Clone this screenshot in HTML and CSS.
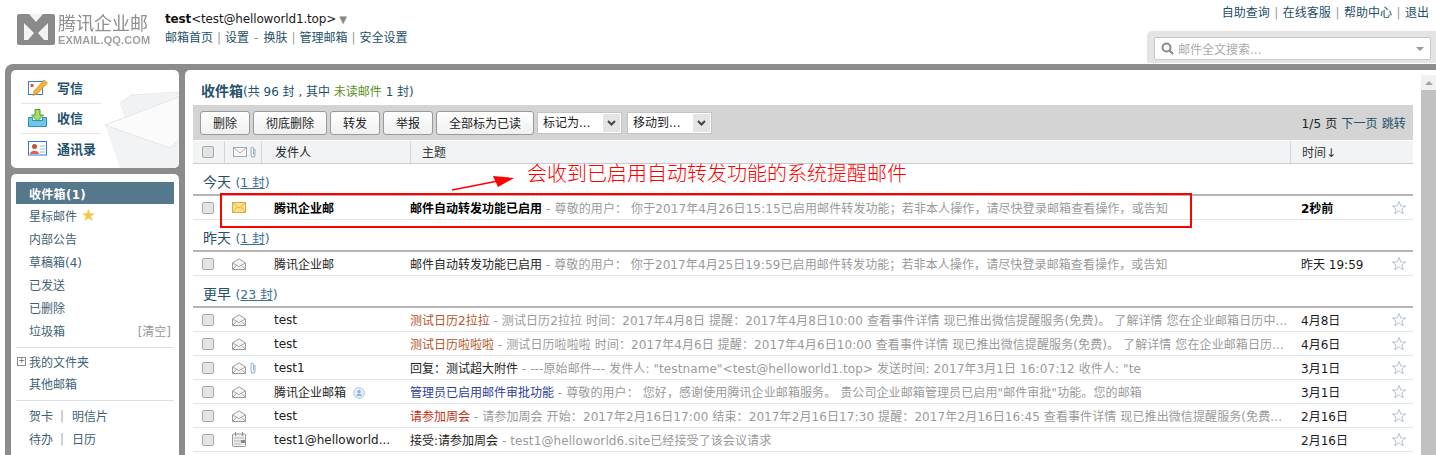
FILE: index.html
```html
<!DOCTYPE html>
<html lang="zh-CN">
<head>
<meta charset="UTF-8">
<title>腾讯企业邮 - 收件箱</title>
<link rel="stylesheet" href="styles.css">
</head>
<body>
<svg width="0" height="0" class="defs">
  <symbol id="env-open" viewBox="0 0 14 12">
    <path d="M.5 5 7 .8 13.500 5v6.500H.5z" fill="#f4f4f4" stroke="#9a9a9a"/>
    <path d="M.5 5 7 8.500 13.500 5M.5 11.500 5 7M13.500 11.500 9 7" fill="none" stroke="#a8a8a8"/>
  </symbol>
  <symbol id="clip" viewBox="0 0 8 12">
    <path d="M6 3v6a2 2 0 0 1-4 0V2.500a1.300 1.300 0 0 1 2.600 0V8.500" fill="none" stroke="#9fb4c8" stroke-width="1.100"/>
  </symbol>
  <symbol id="star" viewBox="0 0 16 16">
    <path d="M8 1.500 9.900 6h4.800l-3.800 3 1.400 4.800L8 11l-4.300 2.800L5.100 9 1.300 6h4.800z" fill="#fff" stroke="#b4c2d0"/>
  </symbol>
</svg>

<div class="top">
  <div class="logo">
    <svg class="logo-mark" width="38" height="31" viewBox="0 0 38 31">
      <rect width="38" height="31" rx="2" fill="#8a8a8a"/>
      <path d="M12 0h14l-7 8zM7 9l10 10-6 7H7zM31 9 21 19l6 7h4z" fill="#f4f4f4"/>
    </svg>
    <div class="logo-text">
      <div class="logo-cn">腾讯企业邮</div>
      <div class="logo-en">EXMAIL.QQ.COM</div>
    </div>
  </div>
  <div class="account">
    <div class="account-name"><b>test</b>&lt;test@helloworld1.top&gt;<span class="caret">▼</span></div>
    <div class="links">
      <a>邮箱首页</a><i>|</i><a>设置</a><span class="dash">-</span><a>换肤</a><i>|</i><a>管理邮箱</a><i>|</i><a>安全设置</a>
    </div>
  </div>
  <div class="top-right">
    <div class="links">
      <a>自助查询</a><i>|</i><a>在线客服</a><i>|</i><a>帮助中心</a><i>|</i><a>退出</a>
    </div>
    <div class="search-wrap">
      <div class="search">
        <svg width="13" height="13" viewBox="0 0 13 13"><circle cx="5.500" cy="5.500" r="4" fill="none" stroke="#8a8a8a" stroke-width="2"/><path d="M8.500 8.500 12 12" stroke="#8a8a8a" stroke-width="2.200"/></svg>
        <span class="search-hint">邮件全文搜索...</span>
        <span class="search-arrow"></span>
      </div>
    </div>
  </div>
</div>

<div class="shell">
  <div class="side">
    <div class="card quick">
      <svg class="watermark" width="78" height="98" viewBox="0 0 78 98">
        <path d="M19 33 30 25 78 22v20L30 60z" fill="#f0f2f3" stroke="#e8eaec"/>
        <path d="M4 55 78 27v71H19z" fill="#f2f3f4"/>
        <path d="M4 55 78 27v43l-9 8z" fill="#fbfbfb" stroke="#e4e6e8"/>
      </svg>
      <div class="quick-item">
        <svg width="20" height="17" viewBox="0 0 20 17"><rect x=".5" y="2.500" width="14" height="13" fill="#fff" stroke="#3b80c8"/><rect x="2.500" y="5" width="3" height="3" fill="#e2583e"/><path d="M6 12 16 1l3.500 3L9 15l-4 1.500z" fill="#f3b33d" stroke="#b9801e" stroke-width=".6"/></svg>
        <span>写信</span>
      </div>
      <div class="quick-item">
        <svg width="20" height="18" viewBox="0 0 20 18"><path d="M7 .5h5v5.500h3.500L9.500 12l-6-6H7z" fill="#a6dc6e" stroke="#4f9a2c"/><path d="M.5 8.500v9h18v-9h-4v3h-10v-3z" fill="#6fc7e8" stroke="#2a8fbd"/></svg>
        <span>收信</span>
      </div>
      <div class="quick-item">
        <svg width="20" height="15" viewBox="0 0 20 15"><rect x=".5" y=".5" width="18" height="13.500" fill="#fff" stroke="#2a7fd0"/><circle cx="6.500" cy="5.500" r="2.500" fill="#c8552f"/><path d="M2 13c0-4.500 9-4.500 9 0z" fill="#d9634a"/><path d="M12 5h5M12 8h5M12 11h5" stroke="#9db5cc"/></svg>
        <span>通讯录</span>
      </div>
    </div>
    <div class="card folders">
      <div class="folder on">收件箱(1)</div>
      <div class="folder">星标邮件 <span class="side-star">★</span></div>
      <div class="folder">内部公告</div>
      <div class="folder">草稿箱(4)</div>
      <div class="folder">已发送</div>
      <div class="folder">已删除</div>
      <div class="folder trash"><span>垃圾箱</span><span class="clear">[清空]</span></div>
      <div class="folder-sep"></div>
      <div class="folder tight mine"><span class="plus">+</span>我的文件夹</div>
      <div class="folder">其他邮箱</div>
      <div class="folder-sep"></div>
      <div class="folder"><span>贺卡</span><i>|</i><span>明信片</span></div>
      <div class="folder"><span>待办</span><i>|</i><span>日历</span></div>
    </div>
  </div>

  <div class="main">
    <div class="content">
      <div class="title"><b>收件箱</b>(共 96 封 , 其中 <span class="unread">未读邮件</span> 1 封)</div>

      <div class="toolbar">
        <button>删除</button>
        <button class="w2">彻底删除</button>
        <button>转发</button>
        <button>举报</button>
        <button class="w3">全部标为已读</button>
        <div class="drop">标记为...<span class="drop-btn"><svg width="9" height="6" viewBox="0 0 9 6"><path d="M1 1l3.500 3.500L8 1" fill="none" stroke="#444" stroke-width="2"/></svg></span></div>
        <div class="drop">移动到...<span class="drop-btn"><svg width="9" height="6" viewBox="0 0 9 6"><path d="M1 1l3.500 3.500L8 1" fill="none" stroke="#444" stroke-width="2"/></svg></span></div>
        <div class="pager"><span class="dark">1/5 页</span> <a>下一页</a> <a>跳转</a></div>
      </div>

      <div class="row head">
        <span class="c-check"><span class="box"></span></span>
        <span class="c-icon head-icon">
          <svg width="14" height="10" viewBox="0 0 14 10"><rect x=".5" y=".5" width="13" height="9" fill="#f8f8f8" stroke="#a8a8a8"/><path d="M.5.500 7 6l6.500-5.500" fill="none" stroke="#a8a8a8"/></svg>
          <svg class="clip" width="8" height="12"><use href="#clip"/></svg>
        </span>
        <span class="c-from">发件人</span>
        <span class="c-subject">主题</span>
        <span class="c-time">时间↓</span>
      </div>

      <div class="group">今天 <span class="cnt">(<u>1 封</u>)</span></div>
      <div class="row new">
        <span class="c-check"><span class="box"></span></span>
        <span class="c-icon"><svg width="14" height="11" viewBox="0 0 14 11"><rect x=".5" y=".5" width="13" height="10" fill="#fbe08e" stroke="#e0a63a"/><path d="M.5.500 7 6l6.500-5.500M.5 10.500 5 5M13.500 10.500 9 5" fill="none" stroke="#e8b24a"/></svg></span>
        <span class="c-from">腾讯企业邮</span>
        <span class="c-subject"><span class="subj">邮件自动转发功能已启用</span> <span class="pre">- 尊敬的用户： 你于2017年4月26日15:15已启用邮件转发功能；若非本人操作，请尽快登录邮箱查看操作，或告知</span></span>
        <span class="c-time">2秒前</span>
        <span class="c-star"><svg width="16" height="16"><use href="#star"/></svg></span>
      </div>

      <div class="group">昨天 <span class="cnt">(<u>1 封</u>)</span></div>
      <div class="row">
        <span class="c-check"><span class="box"></span></span>
        <span class="c-icon"><svg width="14" height="12"><use href="#env-open"/></svg></span>
        <span class="c-from">腾讯企业邮</span>
        <span class="c-subject"><span class="subj">邮件自动转发功能已启用</span> <span class="pre">- 尊敬的用户： 你于2017年4月25日19:59已启用邮件转发功能；若非本人操作，请尽快登录邮箱查看操作，或告知</span></span>
        <span class="c-time">昨天 19:59</span>
        <span class="c-star"><svg width="16" height="16"><use href="#star"/></svg></span>
      </div>

      <div class="group">更早 <span class="cnt">(<u>23 封</u>)</span></div>
      <div class="row">
        <span class="c-check"><span class="box"></span></span>
        <span class="c-icon"><svg width="14" height="12"><use href="#env-open"/></svg></span>
        <span class="c-from">test</span>
        <span class="c-subject"><span class="subj cal">测试日历2拉拉</span> <span class="pre">- 测试日历2拉拉 时间：2017年4月8日 提醒：2017年4月8日10:00 查看事件详情 现已推出微信提醒服务(免费)。 了解详情 您在企业邮箱日历中...</span></span>
        <span class="c-time">4月8日</span>
        <span class="c-star"><svg width="16" height="16"><use href="#star"/></svg></span>
      </div>
      <div class="row">
        <span class="c-check"><span class="box"></span></span>
        <span class="c-icon"><svg width="14" height="12"><use href="#env-open"/></svg></span>
        <span class="c-from">test</span>
        <span class="c-subject"><span class="subj cal">测试日历啦啦啦</span> <span class="pre">- 测试日历啦啦啦 时间：2017年4月6日 提醒：2017年4月6日10:00 查看事件详情 现已推出微信提醒服务(免费)。 了解详情 您在企业邮箱日历...</span></span>
        <span class="c-time">4月6日</span>
        <span class="c-star"><svg width="16" height="16"><use href="#star"/></svg></span>
      </div>
      <div class="row">
        <span class="c-check"><span class="box"></span></span>
        <span class="c-icon"><svg width="14" height="12"><use href="#env-open"/></svg><svg class="clip" width="8" height="12"><use href="#clip"/></svg></span>
        <span class="c-from">test1</span>
        <span class="c-subject"><span class="subj">回复：测试超大附件</span> <span class="pre">- ---原始邮件--- 发件人: "testname"&lt;test@helloworld1.top&gt; 发送时间: 2017年3月1日 16:07:12 收件人: "te</span></span>
        <span class="c-time">3月1日</span>
        <span class="c-star"><svg width="16" height="16"><use href="#star"/></svg></span>
      </div>
      <div class="row">
        <span class="c-check"><span class="box"></span></span>
        <span class="c-icon"><svg width="14" height="12"><use href="#env-open"/></svg></span>
        <span class="c-from">腾讯企业邮箱 <svg class="badge" width="12" height="12" viewBox="0 0 12 12"><circle cx="6" cy="6" r="5.300" fill="#e6eff7" stroke="#a9c6e0"/><circle cx="6" cy="4.800" r="1.800" fill="#8fb4d6"/><path d="M3 9c.5-3 5.500-3 6 0z" fill="#8fb4d6"/></svg></span>
        <span class="c-subject"><span class="subj admin">管理员已启用邮件审批功能</span> <span class="pre">- 尊敬的用户： 您好，感谢使用腾讯企业邮箱服务。 贵公司企业邮箱管理员已启用"邮件审批"功能。您的邮箱</span></span>
        <span class="c-time">3月1日</span>
        <span class="c-star"><svg width="16" height="16"><use href="#star"/></svg></span>
      </div>
      <div class="row">
        <span class="c-check"><span class="box"></span></span>
        <span class="c-icon"><svg width="14" height="12"><use href="#env-open"/></svg></span>
        <span class="c-from">test</span>
        <span class="c-subject"><span class="subj red">请参加周会</span> <span class="pre">- 请参加周会 开始：2017年2月16日17:00 结束：2017年2月16日17:30 提醒：2017年2月16日16:45 查看事件详情 现已推出微信提醒服务(免费...</span></span>
        <span class="c-time">2月16日</span>
        <span class="c-star"><svg width="16" height="16"><use href="#star"/></svg></span>
      </div>
      <div class="row">
        <span class="c-check"><span class="box"></span></span>
        <span class="c-icon"><svg width="14" height="15" viewBox="0 0 14 15"><rect x=".5" y="2" width="13" height="12.500" rx="1" fill="#eee" stroke="#999"/><path d="M3.500 0v4M10.500 0v4" stroke="#888"/><path d="M2 6h10M2 9h7M2 12h7" stroke="#b5b5b5"/><rect x="9" y="8" width="4" height="3" fill="#888"/></svg></span>
        <span class="c-from">test1@helloworld...</span>
        <span class="c-subject"><span class="subj">接受:请参加周会</span> <span class="pre">- test1@helloworld6.site已经接受了该会议请求</span></span>
        <span class="c-time">2月16日</span>
        <span class="c-star"><svg width="16" height="16"><use href="#star"/></svg></span>
      </div>
    </div>
    <div class="scrollbar">
      <span class="scroll-up"></span>
      <span class="scroll-thumb"></span>
    </div>
  </div>
</div>

<!-- 标注 -->
<div class="mark-box"></div>
<svg class="mark-arrow" width="68" height="20" viewBox="0 0 68 20"><path d="M0 16 46 7" stroke="#f00" stroke-width="1.500"/><path d="M41 2 62 4 46 13z" fill="#f00"/></svg>
<div class="mark-text">会收到已启用自动转发功能的系统提醒邮件</div>
</body>
</html>
```

FILE: styles.css
```css
html, body {
  margin: 0;
  height: 100%;
  overflow: hidden;
}
body {
  position: relative;
  background: #fff;
  font-family: "DejaVu Sans", "Noto Sans CJK SC", sans-serif;
  font-size: 12px;
  color: #1a1a1a;
}
.defs {
  position: absolute;
}
i {
  font-style: normal;
}

/* 顶部 */
.top {
  display: flex;
  height: 64px;
}
.logo {
  display: flex;
  gap: 3px;
  width: 165px;
  padding: 14px 0 0 17px;
  box-sizing: border-box;
  filter: blur(.4px);
}
.logo-mark {
  flex: none;
}
.logo-text {
  color: #8f8f8f;
}
.logo-cn {
  font-family: "Liberation Sans", "Noto Sans CJK SC", sans-serif;
  font-size: 18px;
  line-height: 21px;
  white-space: nowrap;
}
.logo-en {
  font-family: "Liberation Sans", sans-serif;
  font-size: 11px;
  line-height: 11px;
  font-weight: bold;
  letter-spacing: .15px;
  color: #a0a0a0;
  white-space: nowrap;
}
.account {
  padding-top: 11px;
}
.account-name {
  line-height: 17px;
  letter-spacing: -.15px;
}
.account-name b {
  color: #111;
}
.caret {
  color: #888;
  font-size: 10px;
  margin-left: 3px;
}
.links {
  line-height: 18px;
  margin-top: 1px;
  color: #25506a;
}
.links i {
  margin: 0 4px;
  color: #999;
}
.dash {
  margin: 0 5px;
  color: #888;
}
.top-right {
  margin-left: auto;
  display: flex;
  flex-direction: column;
  align-items: flex-end;
}
.top-right .links {
  margin: 4px 7px 0 0;
}
.top-right .links i {
  margin: 0 4.500px;
}
.search-wrap {
  margin-top: 9px;
  width: 289px;
  height: 32px;
  box-sizing: border-box;
  padding: 6px 5px 0 7px;
  background: #e4e4e4;
  border-radius: 5px 0 0 0;
}
.search {
  display: flex;
  align-items: center;
  gap: 4px;
  height: 21px;
  padding: 0 6px;
  background: #fff;
  border: 1px solid #c9c9c9;
  border-radius: 2px;
}
.search-hint {
  color: #aaa;
}
.search-arrow {
  margin-left: auto;
  border: 4px solid transparent;
  border-top: 4px solid #999;
  border-bottom: 0;
}

/* 主体 */
.shell {
  display: flex;
  gap: 6px;
  margin-left: 5px;
  padding: 6px 0 0 6px;
  background: #8c8c8c;
  border-radius: 8px 0 0 0;
  height: calc(100% - 70px);
}
.card {
  background: #fff;
  border-radius: 5px;
}
.side {
  flex: none;
  width: 168px;
  display: flex;
  flex-direction: column;
  gap: 6px;
}
.quick {
  position: relative;
  height: 98px;
  overflow: hidden;
  padding: 4px 0 0 10px;
  box-sizing: border-box;
}
.watermark {
  position: absolute;
  right: 0;
  top: 0;
}
.quick-item {
  position: relative;
  display: flex;
  align-items: center;
  gap: 9px;
  width: 80px;
  height: 30px;
  box-sizing: border-box;
  padding: 0 0 2px 7px;
  font-size: 13px;
  font-weight: bold;
  color: #25506a;
  border-bottom: 1px solid #e6e6e6;
}
.quick-item:last-child {
  border-bottom: 0;
}
.quick-item svg {
  flex: none;
}
.folders {
  flex: 1;
  padding: 8px 5px 0;
  border-radius: 5px 5px 0 0;
}
.folder {
  display: flex;
  align-items: center;
  gap: 4px;
  height: 23px;
  padding-left: 13px;
  color: #3f5f74;
}
.folder.on {
  height: 22px;
  background: #56788d;
  color: #fff;
  font-weight: bold;
  letter-spacing: .3px;
}
.folder i {
  margin: 0 4px 0 3px;
  color: #aaa;
}
.side-star {
  color: #f7c546;
  font-size: 17px;
  line-height: 1;
}
.trash {
  justify-content: space-between;
}
.clear {
  color: #999;
  margin-right: 3px;
}
.folder-sep {
  height: 1px;
  margin: 5px 0 3px;
  background: #dde2e6;
}
.mine {
  height: 22px;
  margin-top: -1px;
  padding-left: 1px;
  gap: 3px;
}
.plus {
  display: flex;
  align-items: center;
  justify-content: center;
  width: 7px;
  height: 7px;
  border: 1px solid #8c8c8c;
  color: #666;
  font-size: 8px;
  line-height: 1;
}

/* 邮件列表 */
.main {
  flex: 1;
  min-width: 0;
  display: flex;
  background: #fff;
  border-radius: 5px 0 0 0;
}
.content {
  flex: 1;
  min-width: 0;
  padding: 0 8px;
}
.title {
  height: 35px;
  padding-left: 8px;
  line-height: 42px;
  color: #25506a;
}
.title b {
  font-size: 14px;
}
.unread {
  color: #5b8f1f;
}
.toolbar {
  display: flex;
  align-items: center;
  gap: 3px;
  height: 35px;
  padding-left: 7px;
  background: #d4d4d4;
}
button {
  width: 50px;
  height: 24px;
  padding: 0;
  font: inherit;
  color: #222;
  background: linear-gradient(#fff, #f0f0f0);
  border: 1px solid #9a9a9a;
  border-radius: 3px;
}
button.w2 {
  width: 74px;
}
button.w3 {
  width: 98px;
}
.drop {
  display: flex;
  justify-content: space-between;
  width: 85px;
  height: 22px;
  line-height: 18px;
  box-sizing: border-box;
  padding: 1px 1px 1px 5px;
  background: #fff;
  border: 1px solid #c4c4c4;
}
.drop + .drop {
  margin-left: 2px;
}
.drop-btn {
  display: flex;
  align-items: center;
  justify-content: center;
  width: 17px;
  background: #e4e4e4;
}
.pager {
  margin-left: auto;
  padding-right: 7px;
  letter-spacing: .15px;
  color: #25506a;
}
.dark {
  color: #222;
}
.row {
  display: flex;
  align-items: center;
  height: 23px;
  border-bottom: 1px solid #e3e6e8;
  white-space: nowrap;
}
.row.head {
  height: 22px;
  background: #f1f3f5;
  border-top: 1px solid #fff;
  border-bottom: 1px solid #c6cbd0;
  color: #333;
}
.head .c-icon,
.head .c-from,
.head .c-subject,
.head .c-time {
  align-self: stretch;
  display: flex;
  align-items: center;
  border-left: 1px solid #d2d6da;
}
.head .c-from,
.head .c-subject,
.head .c-time {
  padding-bottom: 2px;
}
.c-check {
  flex: none;
  width: 31px;
  padding-left: 9px;
  box-sizing: border-box;
  display: flex;
}
.box {
  width: 10px;
  height: 10px;
  background: #e4e4e4;
  border: 1px solid #a9a9a9;
  border-radius: 2px;
}
.c-icon {
  flex: none;
  width: 37px;
  padding-left: 8px;
  box-sizing: border-box;
  display: flex;
  align-items: center;
  gap: 3px;
}
.head-icon {
  gap: 2px;
}
.clip {
  flex: none;
}
.c-from {
  flex: none;
  width: 149px;
  padding-left: 13px;
  box-sizing: border-box;
  color: #222;
}
.c-subject {
  flex: none;
  width: 880px;
  overflow: hidden;
}
.head .c-subject {
  padding-left: 11px;
  box-sizing: border-box;
}
.c-time {
  flex: none;
  width: 101px;
  padding-left: 11px;
  box-sizing: border-box;
}
.head .c-time {
  flex: 1;
}
.c-star {
  flex: none;
  display: flex;
}
.badge {
  vertical-align: -2px;
  margin-left: 3px;
}
.subj {
  color: #222;
}
.subj.cal {
  color: #b4552a;
}
.subj.admin {
  color: #2d3c9c;
}
.subj.red {
  color: #c0300f;
}
.pre {
  color: #9a9a9a;
  letter-spacing: .1px;
}
.new {
  font-weight: bold;
}
.new .pre {
  font-weight: normal;
}
.new .subj,
.new .c-from,
.new .c-time {
  color: #000;
}
.group {
  height: 30px;
  padding-left: 10px;
  line-height: 37px;
  font-size: 14px;
  border-bottom: 2px solid #b4b4b4;
  color: #25506a;
}
.group .cnt {
  font-size: 12.500px;
  color: #3b6e8f;
}

/* 滚动条 */
.scrollbar {
  flex: none;
  width: 15px;
  margin-top: 5px;
  display: flex;
  flex-direction: column;
  background: #f1f1f1;
}
.scroll-up {
  width: 0;
  margin: 6px auto 5px;
  border: 4px solid transparent;
  border-bottom: 4px solid #a3a3a3;
  border-top: 0;
}
.scroll-thumb {
  flex: 1;
  background: #c1c1c1;
}

/* 标注 */
.mark-box {
  position: absolute;
  left: 220px;
  top: 193px;
  width: 968px;
  height: 31px;
  border: 2px solid #f00;
}
.mark-arrow {
  position: absolute;
  left: 452px;
  top: 174px;
}
.mark-text {
  position: absolute;
  left: 527px;
  top: 160px;
  font-family: "Noto Sans CJK SC", sans-serif;
  font-size: 20px;
  font-weight: 300;
  line-height: 26px;
  color: #f00;
}
```
